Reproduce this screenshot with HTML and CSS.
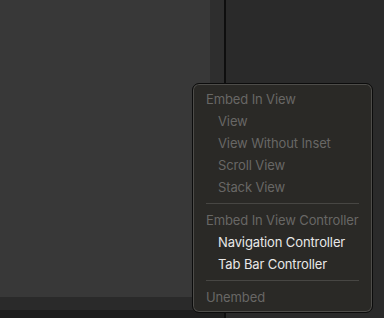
FILE: index.html
```html
<!DOCTYPE html>
<html lang="en">
<head>
  <meta charset="UTF-8">
  <title>Embed Menu</title>
  <link rel="stylesheet" href="styles.css">
</head>
<body>
  <div class="workspace">
    <!-- Editor column -->
    <div class="editor">
      <div class="editor-main">
        <div class="canvas"></div>
        <div class="gutter"></div>
      </div>
      <div class="editor-bar"></div>
      <div class="status-bar"></div>
    </div>
    <div class="divider"></div>
    <!-- Inspector column -->
    <div class="inspector"></div>
  </div>

  <!-- Context menu -->
  <div class="menu">
    <div class="menu-header">Embed In View</div>
    <div class="menu-item disabled">View</div>
    <div class="menu-item disabled">View Without Inset</div>
    <div class="menu-item disabled">Scroll View</div>
    <div class="menu-item disabled">Stack View</div>
    <div class="menu-sep"></div>
    <div class="menu-header">Embed In View Controller</div>
    <div class="menu-item">Navigation Controller</div>
    <div class="menu-item">Tab Bar Controller</div>
    <div class="menu-sep"></div>
    <div class="menu-header">Unembed</div>
  </div>
</body>
</html>
```

FILE: styles.css
```css
/* Global Styles */
body {
  margin: 0;
  padding: 0;
  width: 384px;
  height: 318px;
  overflow: hidden;
  background: #2a2a2a;
  font-family: Inter, "Noto Sans", sans-serif;
}

/* Window layout */
.workspace {
  display: flex;
  height: 318px;
}
.editor {
  width: 224px;
  display: flex;
  flex-direction: column;
}
.editor-main {
  flex: 1;
  display: flex;
}
.canvas {
  width: 210px;
  background: #383838;
}
.gutter {
  flex: 1;
  background: #2e2e2e;
}
.editor-bar {
  height: 13px;
  background: #2a2a2a;
}
.status-bar {
  height: 8px;
  background: #1e1e1e;
}
.divider {
  width: 2px;
  background: #0e0e0e;
}
.inspector {
  flex: 1;
  background: #2a2a2a;
}

/* Context menu */
.menu {
  position: absolute;
  left: 192px;
  top: 83px;
  width: 179px;
  padding: 4px 0;
  background: #2a2926;
  border: 1px solid #0c0c0c;
  border-radius: 7px;
  box-shadow: inset 0 0 0 1px #4e4d4a;
  font-size: 13px;
  letter-spacing: -0.12px;
}
.menu-header,
.menu-item {
  height: 22px;
  line-height: 22px;
  padding-left: 13px;
  color: #686765;
  white-space: nowrap;
}
.menu-item {
  padding-left: 25px;
  color: #e8e8e8;
}
.menu-item.disabled {
  color: #686765;
}
.menu-sep {
  height: 1px;
  margin: 5px 13px;
  background: #474643;
}
```
